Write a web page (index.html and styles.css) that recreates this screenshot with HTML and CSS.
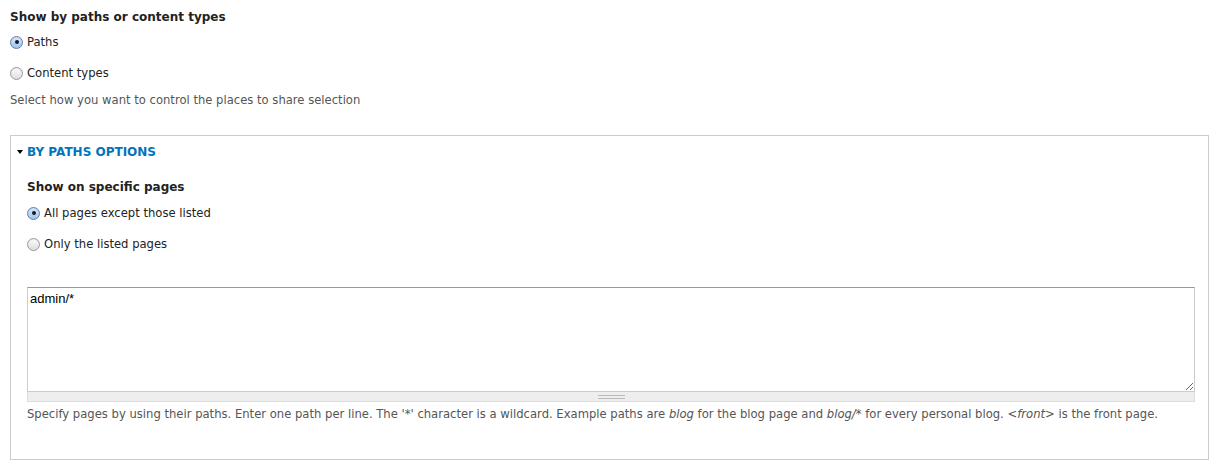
FILE: index.html
```html
<!DOCTYPE html>
<html lang="en">
<head>
     <meta charset="UTF-8">
     <title>Share settings</title>
     <link rel="stylesheet" href="styles.css">
</head>
<body>
     <div class="page">
          <div class="form-item">
               <div class="label">Show by paths or content types</div>
               <div class="radios">
                    <label class="radio first"><span class="dot checked"></span>Paths</label>
                    <label class="radio"><span class="dot"></span>Content types</label>
               </div>
               <div class="description">Select how you want to control the places to share selection</div>
          </div>

          <div class="fieldset">
               <div class="legend"><span class="arrow"></span>BY PATHS OPTIONS</div>
               <div class="fieldset-body">
                    <div class="label">Show on specific pages</div>
                    <div class="radios">
                         <label class="radio first"><span class="dot checked"></span>All pages except those listed</label>
                         <label class="radio"><span class="dot"></span>Only the listed pages</label>
                    </div>
                    <div class="textarea-wrap">
                         <textarea class="pages">admin/*</textarea>
                         <div class="grippie"><span></span></div>
                    </div>
                    <div class="description help">Specify pages by using their paths. Enter one path per line. The '*' character is a wildcard. Example paths are <em>blog</em> for the blog page and <em>blog/*</em> for every personal blog. <em>&lt;front&gt;</em> is the front page.</div>
               </div>
          </div>
     </div>
</body>
</html>
```

FILE: styles.css
```css
html, body{
     margin: 0;
     padding: 0;
     background: #fff;
}
body{
     font-family: "DejaVu Sans", "Lucida Grande", sans-serif;
     font-size: 11.6px;
     line-height: 18px;
     color: #333;
}
.page{
     padding: 8px 10px 0 10px;
}
.label{
     font-size: 12px;
     font-weight: bold;
     color: #222;
}
.radios{
     display: flex;
     flex-direction: column;
}
.radio{
     display: flex;
     align-items: center;
     gap: 4px;
     margin-top: 13px;
     color: #222;
}
.radio.first{
     margin-top: 7px;
}
.dot{
     width: 11px;
     height: 11px;
     border-radius: 50%;
     border: 1px solid #9a9a9a;
     background: linear-gradient(#fdfdfd, #dcdcdc);
     display: flex;
     align-items: center;
     justify-content: center;
     box-shadow: inset 0 1px 1px rgba(0,0,0,0.08);
}
.dot.checked{
     border-color: #5f7fa8;
     background: linear-gradient(#dcebfb, #9cc3ee);
}
.dot.checked:after{
     content: "";
     width: 4px;
     height: 4px;
     border-radius: 50%;
     background: #1a1a1a;
}
.description{
     margin-top: 9px;
     color: #555;
}
.fieldset{
     margin-top: 26px;
     border: 1px solid #ccc;
     padding: 7px 13px 36px 6px;
}
.legend{
     display: flex;
     align-items: center;
     gap: 4px;
     font-size: 12px;
     color: #0074bd;
     font-weight: bold;
}
.arrow{
     width: 0;
     height: 0;
     border-left: 3px solid transparent;
     border-right: 3px solid transparent;
     border-top: 4px solid #000;
}
.fieldset-body{
     padding-left: 10px;
     margin-top: 17px;
}
.fieldset-body .radio.first{
     margin-top: 8px;
}
.textarea-wrap{
     margin-top: 34px;
}
.pages{
     display: block;
     box-sizing: border-box;
     width: 100%;
     height: 105px;
     margin: 0;
     border: 1px solid #ccc;
     border-top-color: #999;
     padding: 3px 2px;
     font-family: "Liberation Sans", Arial, sans-serif;
     font-size: 13px;
     line-height: 16px;
     color: #000;
     resize: vertical;
}
.grippie{
     height: 9px;
     background: #eee;
     border: 1px solid #ddd;
     border-top: none;
     display: flex;
     align-items: center;
     justify-content: center;
}
.grippie span{
     width: 27px;
     height: 2px;
     border-top: 1px solid #bbb;
     border-bottom: 1px solid #bbb;
}
.help{
     margin-top: 3px;
}
```
